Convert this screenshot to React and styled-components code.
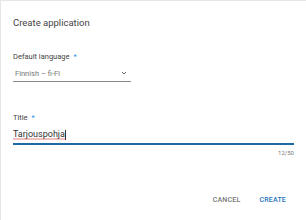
import React from "react";
import styled, { createGlobalStyle } from "styled-components";

const Global = createGlobalStyle`
  html, body {
    margin: 0;
    padding: 0;
    background: #e6e6e6;
    font-family: Roboto, "Liberation Sans", sans-serif;
  }
`;

const Dialog = styled.div`
  margin: 1px 0 0 1px;
  width: 305px;
  height: 219px;
  background: #fff;
  box-sizing: border-box;
  padding: 16px 12px 0 12px;
  display: flex;
  flex-direction: column;
`;

const Heading = styled.h2`
  margin: 0;
  font-size: 9.5px;
  font-weight: 400;
  color: #444;
  line-height: 12px;
`;

const Field = styled.div`
  display: flex;
  flex-direction: column;
  margin-top: ${(p) => p.top}px;
  width: ${(p) => p.width};
`;

const Label = styled.label`
  font-size: 7.5px;
  color: #444;
  line-height: 10px;
`;

const Star = styled.span`
  color: #2196f3;
  margin-left: 4px;
`;

const SelectBox = styled.div`
  display: flex;
  align-items: center;
  justify-content: space-between;
  height: 16px;
  margin-top: 3px;
  padding: 0 4px 0 2px;
  border-bottom: 1px solid #8a8a8a;
  font-size: 7.5px;
  color: #777;
`;

const InputBox = styled.div`
  display: flex;
  align-items: center;
  height: 17px;
  margin-top: 3px;
  border-bottom: 2px solid #1f6aa5;
  font-size: 9px;
  color: #333;
`;

const Typed = styled.span`
  line-height: 11px;
  background-image: radial-gradient(circle, #e57373 0.6px, transparent 0.8px);
  background-size: 2px 2px;
  background-repeat: repeat-x;
  background-position: 0 100%;
`;

const Caret = styled.span`
  display: inline-block;
  width: 0.6px;
  height: 10px;
  background: #333;
`;

const Counter = styled.div`
  text-align: right;
  font-size: 6px;
  line-height: 7px;
  color: #777;
  margin-top: 4px;
`;

const Actions = styled.div`
  display: flex;
  justify-content: flex-end;
  gap: 19px;
  margin-top: 40px;
  padding-right: 8px;
`;

const Button = styled.button`
  border: 0;
  background: none;
  padding: 0;
  font-family: inherit;
  font-size: 7px;
  font-weight: 500;
  letter-spacing: 0.2px;
  text-transform: uppercase;
  color: ${(p) => (p.primary ? "#1e73be" : "#777")};
`;

export default function App() {
  return (
    <>
      <Global />
      <Dialog>
        <Heading>Create application</Heading>
        <Field top={23} width="118px">
          <Label>
            Default language<Star>*</Star>
          </Label>
          <SelectBox>
            <span>Finnish – fi-FI</span>
            <svg width="6" height="4" viewBox="0 0 6 4">
              <path d="M1 1l2 2 2-2" fill="none" stroke="#666" strokeWidth="1" />
            </svg>
          </SelectBox>
        </Field>
        <Field top={31} width="100%">
          <Label>
            Title<Star>*</Star>
          </Label>
          <InputBox>
            <Typed>Tarjouspohja</Typed>
            <Caret />
          </InputBox>
          <Counter>12/50</Counter>
        </Field>
        <Actions>
          <Button>Cancel</Button>
          <Button primary>Create</Button>
        </Actions>
      </Dialog>
    </>
  );
}
